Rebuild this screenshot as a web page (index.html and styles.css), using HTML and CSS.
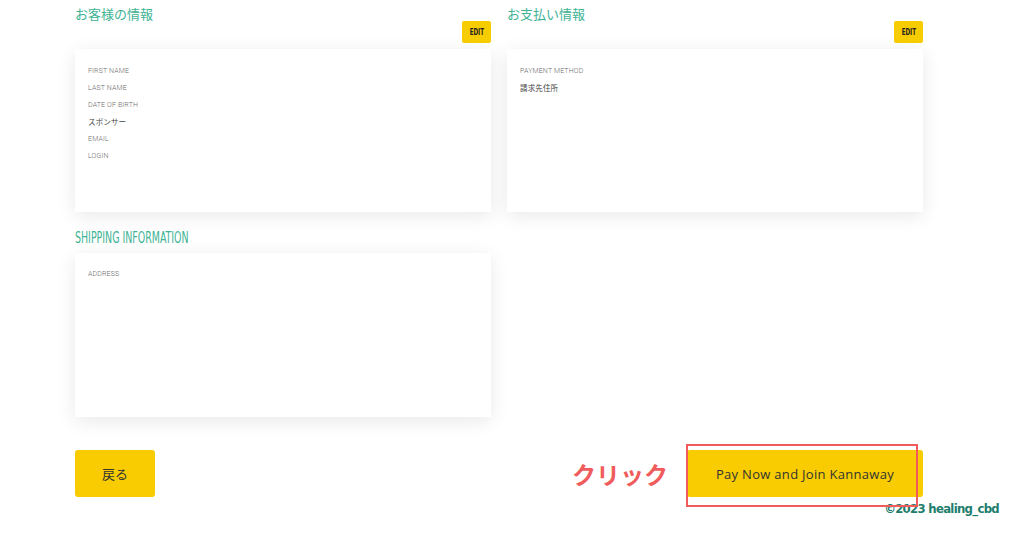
FILE: index.html
```html
<!DOCTYPE html>
<html lang="ja">
<head>
<meta charset="utf-8">
<title>Review</title>
<link rel="stylesheet" href="styles.css">
</head>
<body>
<main class="page">
  <div class="grid">
    <section class="block">
      <h2 class="title jp">お客様の情報</h2>
      <button class="edit"><span class="edit-text">EDIT</span></button>
      <div class="card card-top">
        <p class="label">FIRST NAME</p>
        <p class="label">LAST NAME</p>
        <p class="label">DATE OF BIRTH</p>
        <p class="label dark">スポンサー</p>
        <p class="label">EMAIL</p>
        <p class="label">LOGIN</p>
      </div>
    </section>
    <section class="block">
      <h2 class="title jp">お支払い情報</h2>
      <button class="edit"><span class="edit-text">EDIT</span></button>
      <div class="card card-top">
        <p class="label">PAYMENT METHOD</p>
        <p class="label dark">請求先住所</p>
      </div>
    </section>
    <section class="block ship">
      <h2 class="title cond"><span class="cond-text">SHIPPING INFORMATION</span></h2>
      <div class="card card-ship">
        <p class="label">ADDRESS</p>
      </div>
    </section>
  </div>
  <div class="actions">
    <button class="btn back">戻る</button>
    <div class="right">
      <span class="click">クリック</span>
      <div class="pay-wrap">
        <button class="btn pay">Pay Now and Join Kannaway</button>
        <span class="highlight"></span>
      </div>
    </div>
  </div>
</main>
<div class="credit">©2023 healing_cbd</div>
</body>
</html>
```

FILE: styles.css
```css
* { box-sizing: border-box; }
body {
  margin: 0;
  background: #fff;
  font-family: Roboto, "Noto Sans CJK JP", sans-serif;
  width: 1024px;
  height: 538px;
  overflow: hidden;
}
.page {
  padding: 6px 0 0 75px;
  width: 923px;
}
.grid {
  display: grid;
  grid-template-columns: 416px 416px;
  column-gap: 16px;
}
.block {
  display: flex;
  flex-direction: column;
}
.title {
  margin: 0;
  font-weight: 400;
  color: #40b394;
}
.title.jp {
  font-size: 13px;
  line-height: 15px;
  font-family: "Noto Sans CJK JP", sans-serif;
}
.title.cond {
  font-family: "DejaVu Sans Condensed", sans-serif;
  font-size: 15px;
  line-height: 16px;
  margin-bottom: 7px;
  white-space: nowrap;
}
.cond-text {
  display: inline-block;
  transform: scaleX(0.7);
  transform-origin: left center;
}
.edit {
  align-self: flex-end;
  width: 29px;
  height: 22px;
  margin: 0 0 6px;
  padding: 0;
  border: none;
  border-radius: 2px;
  background: #f8cd00;
  color: #222;
  font-family: "DejaVu Sans Condensed", sans-serif;
  font-weight: 700;
  font-size: 8.5px;
}
.edit-text {
  display: inline-block;
  transform: scaleX(0.72);
}
.card {
  background: #fff;
  box-shadow: 0 4px 18px rgba(0, 0, 0, 0.09);
  padding: 18px 13px 14px;
}
.card-top { height: 163px; }
.card-ship { height: 164px; padding-top: 17px; }
.ship { margin-top: 18px; }
.label {
  margin: 0 0 9px;
  font-size: 7px;
  line-height: 8px;
  font-weight: 300;
  color: #6c6c6c;
  letter-spacing: 0.15px;
}
.label.dark {
  color: #444;
  font-size: 7.5px;
  font-weight: 400;
  font-family: "Noto Sans CJK JP", sans-serif;
}
.actions {
  margin-top: 33px;
  display: flex;
  justify-content: space-between;
  align-items: center;
}
.btn {
  border: none;
  background: #f8cc00;
  border-radius: 3px;
  height: 47px;
  color: #333;
  padding: 0;
}
.back {
  width: 80px;
  font-family: "Noto Sans CJK JP", sans-serif;
  font-size: 13px;
}
.right {
  display: flex;
  align-items: center;
  gap: 19px;
}
.click {
  font-family: "Noto Sans CJK JP", sans-serif;
  font-weight: 700;
  font-size: 24px;
  color: #f05c5c;
}
.pay-wrap { position: relative; }
.pay {
  width: 236px;
  font-family: "Open Sans", sans-serif;
  font-size: 13px;
  letter-spacing: 0.3px;
}
.highlight {
  position: absolute;
  left: -1px;
  top: -6px;
  width: 232px;
  height: 63px;
  border: 2.5px solid #f25b5b;
  pointer-events: none;
}
.credit {
  text-align: right;
  padding-right: 25px;
  margin-top: 4px;
  font-family: "DejaVu Sans Condensed", sans-serif;
  font-weight: 700;
  font-size: 13px;
  line-height: 15px;
  letter-spacing: -0.7px;
  color: #1e7d6c;
}
```
